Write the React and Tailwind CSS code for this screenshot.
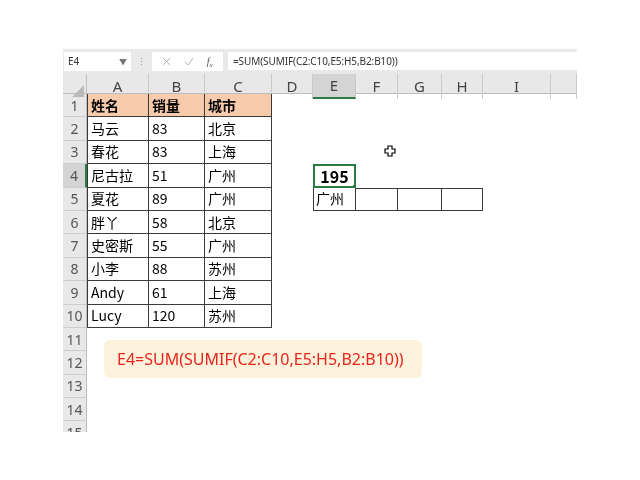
import React from "react";

const GRID = "grid grid-cols-[24px_62px_56px_67px_41px_43px_42px_44px_41px_68px_26px]";
const LETTERS = ["A", "B", "C", "D", "E", "F", "G", "H", "I", ""];

const data = [
  ["姓名", "销量", "城市"],
  ["马云", "83", "北京"],
  ["春花", "83", "上海"],
  ["尼古拉", "51", "广州"],
  ["夏花", "89", "广州"],
  ["胖丫", "58", "北京"],
  ["史密斯", "55", "广州"],
  ["小李", "88", "苏州"],
  ["Andy", "61", "上海"],
  ["Lucy", "120", "苏州"],
];

const font = { fontFamily: '"Noto Sans", "Noto Sans CJK SC", sans-serif' };
const cjk = { fontFamily: '"Noto Sans CJK SC", "Noto Sans", sans-serif', color: "#000" };

function RowHeader({ n }) {
  const active = n === 4;
  return (
    <div
      className={
        "flex items-center justify-center border-b border-[#cdcdcd] text-[14px] text-[#555] " +
        (active
          ? "bg-[#d4d4d4] border-r-2 border-r-[#2b7a45]"
          : "bg-[#e8e8e8] border-r border-r-[#bdbdbd]")
      }
    >
      {n}
    </div>
  );
}

function Row({ n }) {
  const d = n <= 10 ? data[n - 1] : null;
  const cells = [];
  for (let c = 0; c < 10; c++) {
    let cls = "flex items-center overflow-hidden whitespace-nowrap text-[14px] text-black";
    let content = null;
    let extra = null;
    if (d && c < 3) {
      cls += " border-r border-b border-[#3a3a3a] pl-[3px]";
      if (c === 0) cls += " border-l";
      if (n === 1) cls += " bg-[#f8cbad] font-bold";
      content = d[c];
    } else if (n === 4 && c === 4) {
      cls += " relative border-2 border-[#2b7a45] justify-center font-bold text-[16px]";
      content = "195";
      extra = (
        <span className="absolute right-[-3px] bottom-[-3px] w-[5px] h-[5px] bg-[#2b7a45] border border-white z-10" />
      );
    } else if (n === 5 && c >= 4 && c <= 7) {
      cls += " border-r border-b border-[#3a3a3a] pl-[2px]";
      if (c === 4) {
        cls += " border-l";
        content = "广州";
      } else {
        cls += " border-t";
      }
    }
    cells.push(
      <div key={c} className={cls}>
        {content !== null && <span style={cjk}>{content}</span>}
        {extra}
      </div>
    );
  }
  return (
    <div className={GRID + " h-[23.4px] shrink-0"}>
      <RowHeader n={n} />
      {cells}
    </div>
  );
}

export default function App() {
  return (
    <div
      className="relative w-[640px] h-[480px] bg-white overflow-hidden antialiased [will-change:transform]"
      style={font}
    >
      <div className="ml-[63px] mt-[49px] w-[514px] h-[383px] overflow-hidden flex flex-col bg-white">
        {/* formula bar */}
        <div className="h-[25px] shrink-0 bg-[#e9e9e9] flex items-start pt-[3px] pl-[1px]">
          <div className="w-[67px] h-[19px] bg-white flex items-center justify-between px-[4px]">
            <span className="text-[10px] text-[#333]">E4</span>
            <span className="text-[8px] text-[#777]">▼</span>
          </div>
          <div className="w-[21px] h-[19px] flex flex-col items-center justify-center gap-[2px]">
            <span className="w-[1px] h-[1px] bg-[#999]" />
            <span className="w-[1px] h-[1px] bg-[#999]" />
            <span className="w-[1px] h-[1px] bg-[#999]" />
          </div>
          <div className="w-[71px] h-[19px] bg-white flex items-center justify-around px-[4px]">
            <svg width="9" height="9" viewBox="0 0 9 9">
              <path d="M1 1L8 8M8 1L1 8" stroke="#b5b5b5" strokeWidth="1" />
            </svg>
            <svg width="10" height="9" viewBox="0 0 10 9">
              <path d="M1 5L4 8L9 1" stroke="#b5b5b5" strokeWidth="1" fill="none" />
            </svg>
            <span className="text-[10px] italic text-[#555]" style={{ fontFamily: '"Liberation Serif", serif' }}>
              f<sub className="text-[7px]">x</sub>
            </span>
          </div>
          <div className="ml-[5px] flex-1 h-[18px] bg-white flex items-center pl-[5px]">
            <span className="text-[10px] text-[#333] tracking-[-0.1px]">=SUM(SUMIF(C2:C10,E5:H5,B2:B10))</span>
          </div>
        </div>
        {/* column headers */}
        <div className={GRID + " h-[20px] shrink-0 bg-[#e8e8e8] border-b border-[#bdbdbd]"}>
          <div className="relative border-r border-[#bdbdbd]">
            <svg className="absolute right-[2px] bottom-[2px]" width="12" height="12" viewBox="0 0 12 12">
              <path d="M12 0L12 12L0 12Z" fill="#b9b9b9" />
            </svg>
          </div>
          {LETTERS.map((l, i) => (
            <div
              key={i}
              className={
                "flex items-center justify-center text-[15px] text-[#444] border-r border-[#c9c9c9] " +
                (i === 4 ? "bg-[#d4d4d4] border-b-2 border-b-[#2b7a45]" : "")
              }
            >
              {l}
            </div>
          ))}
        </div>
        {Array.from({ length: 15 }, (_, i) => (
          <Row key={i} n={i + 1} />
        ))}
      </div>

      {/* mouse cursor */}
      <svg className="absolute left-[384px] top-[145px]" width="12" height="12" viewBox="0 0 12 12">
        <path d="M4 1H8V4H11V8H8V11H4V8H1V4H4Z" fill="white" stroke="black" strokeWidth="1.2" />
      </svg>

      {/* annotation */}
      <div className="absolute left-[104px] top-[340px] w-[318px] h-[38px] rounded-[6px] bg-[#fdf3dd] flex items-center pl-[13px]">
        <span className="text-[16px] text-[#e8231e]">E4=SUM(SUMIF(C2:C10,E5:H5,B2:B10))</span>
      </div>
    </div>
  );
}
